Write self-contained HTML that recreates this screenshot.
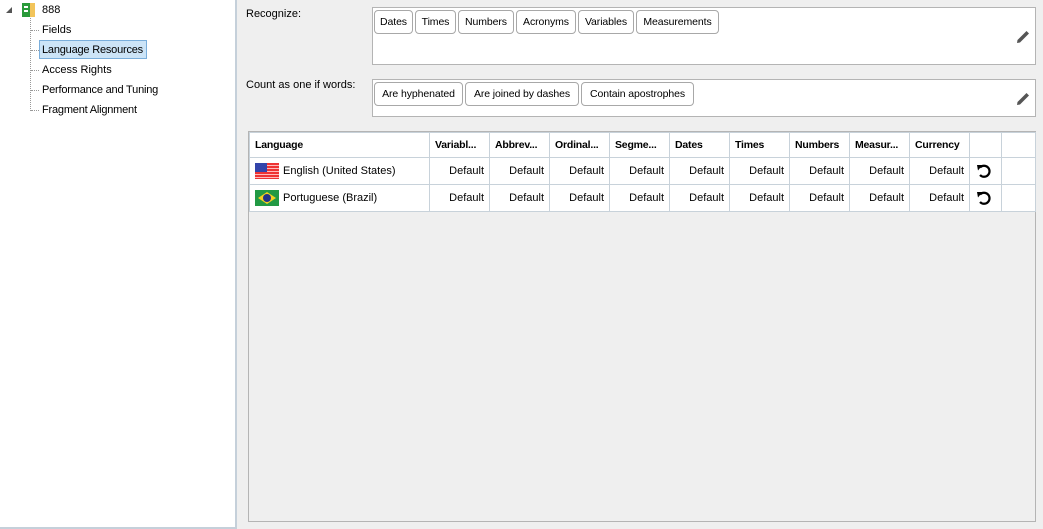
<!DOCTYPE html>
<html><head><style>
body{margin:0;width:1043px;height:529px;background:#efefef;font-family:"Liberation Sans",sans-serif;font-size:11px;color:#000;position:relative;overflow:hidden}
.a{position:absolute}
.left{left:0;top:0;width:235px;height:527px;background:#fff;border-right:2px solid #c5d0da;border-bottom:2px solid #c5d0da}
.pill{position:absolute;height:24px;border:1px solid #a8a8a8;border-radius:4px;background:#fff;line-height:23px;text-align:center;box-sizing:border-box;white-space:nowrap;font-size:10.5px;letter-spacing:-0.1px}
.box{position:absolute;left:372px;width:664px;background:#fff;border:1px solid #b4b4b4;box-sizing:border-box}
table{position:absolute;left:249px;top:132px;border-collapse:collapse;background:#fff;table-layout:fixed;width:786px}
td{border:1px solid #c8d2da;height:27px;padding:0 5px;box-sizing:border-box;white-space:nowrap;text-align:right;font-size:11px;overflow:hidden}
th{border:1px solid #c8d2da;height:25px;padding:0 5px;box-sizing:border-box;text-align:left;font-weight:bold;font-size:10.5px;white-space:nowrap;overflow:hidden;letter-spacing:-0.2px}
.dot{border-left:1px dotted #999}
</style></head><body>
<div class="a left">
 <div class="a" style="left:6px;top:7px;width:0;height:0;border-left:6px solid transparent;border-bottom:6px solid #555"></div>
 <div class="a" style="left:22px;top:3px;width:8px;height:14px;background:#2a9a3a"></div>
 <div class="a" style="left:24px;top:6px;width:4px;height:2px;background:#fff"></div>
 <div class="a" style="left:24px;top:10px;width:4px;height:2px;background:#fff"></div>
 <div class="a" style="left:30px;top:3px;width:5px;height:14px;background:#f2c45a"></div>
 <div class="a" style="left:42px;top:4px">888</div>
 <div class="a dot" style="left:30px;top:18px;height:93px"></div>
 <div class="a" style="left:31px;top:30px;width:8px;border-top:1px dotted #999"></div>
 <div class="a" style="left:31px;top:50px;width:8px;border-top:1px dotted #999"></div>
 <div class="a" style="left:31px;top:70px;width:8px;border-top:1px dotted #999"></div>
 <div class="a" style="left:31px;top:90px;width:8px;border-top:1px dotted #999"></div>
 <div class="a" style="left:31px;top:110px;width:8px;border-top:1px dotted #999"></div>
 <div class="a" style="left:42px;top:24px">Fields</div>
 <div class="a" style="left:39px;top:40px;width:108px;height:19px;background:#cce4f7;border:1px solid #7aaedb;box-sizing:border-box"></div>
 <div class="a" style="left:42px;top:44px;letter-spacing:-0.2px">Language Resources</div>
 <div class="a" style="left:42px;top:64px">Access Rights</div>
 <div class="a" style="left:42px;top:84px;letter-spacing:-0.2px">Performance and Tuning</div>
 <div class="a" style="left:42px;top:104px;letter-spacing:-0.2px">Fragment Alignment</div>
</div>
<div class="a" style="left:246px;top:8px">Recognize:</div>
<div class="a" style="left:246px;top:79px">Count as one if words:</div>
<div class="box" style="top:7px;height:58px"></div>
<div class="box" style="top:79px;height:38px"></div>
<div class="pill" style="left:374px;top:10px;width:39px">Dates</div>
<div class="pill" style="left:415px;top:10px;width:41px">Times</div>
<div class="pill" style="left:458px;top:10px;width:56px">Numbers</div>
<div class="pill" style="left:516px;top:10px;width:60px">Acronyms</div>
<div class="pill" style="left:578px;top:10px;width:56px">Variables</div>
<div class="pill" style="left:636px;top:10px;width:83px">Measurements</div>
<div class="pill" style="left:374px;top:82px;width:89px">Are hyphenated</div>
<div class="pill" style="left:465px;top:82px;width:114px">Are joined by dashes</div>
<div class="pill" style="left:581px;top:82px;width:113px">Contain apostrophes</div>
<svg class="a" style="left:1016px;top:29px" width="15" height="15" viewBox="0 0 15 15"><path d="M1 14 L1.5 11 L10.5 2 L13 4.5 L4 13.5 Z" fill="#555"/></svg>
<svg class="a" style="left:1016px;top:91px" width="15" height="15" viewBox="0 0 15 15"><path d="M1 14 L1.5 11 L10.5 2 L13 4.5 L4 13.5 Z" fill="#555"/></svg>
<div class="a" style="left:248px;top:131px;width:786px;height:389px;border:1px solid #b4b4b4"></div>
<table>
<colgroup><col style="width:180px"><col style="width:60px"><col style="width:60px"><col style="width:60px"><col style="width:60px"><col style="width:60px"><col style="width:60px"><col style="width:60px"><col style="width:60px"><col style="width:60px"><col style="width:32px"><col style="width:34px"></colgroup>
<tr><th>Language</th><th>Variabl...</th><th>Abbrev...</th><th>Ordinal...</th><th>Segme...</th><th>Dates</th><th>Times</th><th>Numbers</th><th>Measur...</th><th>Currency</th><th></th><th></th></tr>
<tr><td style="text-align:left"><span style="display:inline-block;width:24px;height:16px;vertical-align:middle;margin-right:4px;background:repeating-linear-gradient(#e33 0 2px,#fbb 2px 3px);position:relative"><span style="position:absolute;left:0;top:0;width:12px;height:9px;background:#3344aa"></span></span>English (United States)</td><td>Default</td><td>Default</td><td>Default</td><td>Default</td><td>Default</td><td>Default</td><td>Default</td><td>Default</td><td>Default</td><td style="text-align:left;padding-left:6px"><svg width="16" height="16" viewBox="0 0 16 16" style="vertical-align:middle"><path d="M4 4.5 A5.5 5.5 0 1 1 4 12" fill="none" stroke="#000" stroke-width="2.2"/><path d="M1 2 L6.5 2 L2 7.5 Z" fill="#000"/></svg></td><td></td></tr>
<tr><td style="text-align:left"><span style="display:inline-block;width:24px;height:16px;vertical-align:middle;margin-right:4px;background:#229944;position:relative"><span style="position:absolute;left:3px;top:2px;width:18px;height:12px;background:#f5d020;clip-path:polygon(50% 0,100% 50%,50% 100%,0 50%)"></span><span style="position:absolute;left:8px;top:4px;width:8px;height:8px;border-radius:50%;background:#223388"></span></span>Portuguese (Brazil)</td><td>Default</td><td>Default</td><td>Default</td><td>Default</td><td>Default</td><td>Default</td><td>Default</td><td>Default</td><td>Default</td><td style="text-align:left;padding-left:6px"><svg width="16" height="16" viewBox="0 0 16 16" style="vertical-align:middle"><path d="M4 4.5 A5.5 5.5 0 1 1 4 12" fill="none" stroke="#000" stroke-width="2.2"/><path d="M1 2 L6.5 2 L2 7.5 Z" fill="#000"/></svg></td><td></td></tr>
</table>
</body></html>
